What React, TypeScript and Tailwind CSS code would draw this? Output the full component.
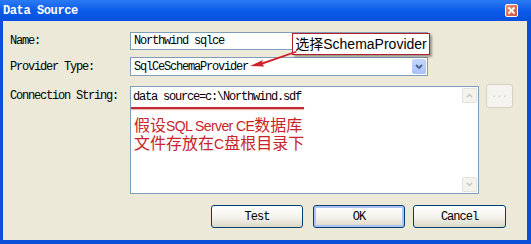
import React from "react";

const mono = { fontFamily: '"Liberation Mono", "DejaVu Sans Mono", monospace' };
const cjk = { fontFamily: '"Liberation Sans", "Noto Sans CJK SC", sans-serif' };

function XpButton({ label, focused }: { label: string; focused?: boolean }) {
  return (
    <div
      className={`flex h-[23px] items-center justify-center rounded-[3px] border border-[#003c74] bg-gradient-to-b from-[#ffffff] via-[#f4f3ee] to-[#dcd8c8] text-[12px] tracking-[-1px] text-black ${
        focused ? "shadow-[inset_0_0_0_2px_#a9c4f5]" : ""
      }`}
      style={mono}
    >
      {label}
    </div>
  );
}

export default function App() {
  return (
    <div className="relative flex h-[244px] w-[531px] flex-col overflow-hidden bg-[#0a4fd8]">
      {/* Title bar */}
      <div className="flex h-[21px] items-center justify-between bg-gradient-to-b from-[#2b7bf5] via-[#0a5be8] to-[#0650dc] pl-[3px] pr-[13px]">
        <span className="text-[12px] font-bold tracking-[-0.4px] text-white" style={mono}>
          Data Source
        </span>
        <div className="flex h-[13px] w-[13px] items-center justify-center rounded-[2px] border border-white bg-gradient-to-br from-[#e8907a] to-[#d0502e]">
          <svg width="9" height="9" viewBox="0 0 9 9">
            <path d="M1.5 1.5 L7.5 7.5 M7.5 1.5 L1.5 7.5" stroke="white" strokeWidth="1.8" />
          </svg>
        </div>
      </div>

      {/* Client area */}
      <div className="ml-[3px] mr-[4px] mb-[4px] flex flex-1 flex-col bg-[#ece9d8] pt-[11px] text-[12px] tracking-[-1.2px] text-black" style={mono}>
        <div className="flex h-[18px] items-center">
          <span className="w-[127px] pl-[7px]">Name:</span>
          <div className="flex h-[18px] w-[298px] items-center border border-[#7f9db9] bg-white pl-[3px]">
            Northwind sqlce
          </div>
        </div>

        <div className="mt-[7px] flex h-[19px] items-center">
          <span className="w-[127px] pl-[7px]">Provider Type:</span>
          <div className="flex h-[19px] w-[298px] items-center justify-between border border-[#7f9db9] bg-white pl-[3px] pr-[1px]">
            <span>SqlCeSchemaProvider</span>
            <div className="flex h-[15px] w-[14px] items-center justify-center rounded-[2px] bg-gradient-to-b from-[#c6d7fb] to-[#a7c0f6]">
              <svg width="8" height="6" viewBox="0 0 8 6">
                <path d="M1 1 L4 4 L7 1" stroke="#4d6185" strokeWidth="1.8" fill="none" />
              </svg>
            </div>
          </div>
        </div>

        <div className="mt-[8px] flex items-start">
          <span className="w-[127px] pl-[7px] pt-[3px]">Connection String:</span>
          <div className="mt-[2px] flex h-[108px] w-[349px] border border-[#7f9db9] bg-white">
            <div className="flex flex-1 flex-col">
              <div className="pl-[2px] pt-[3px] leading-[14px]">data source=c:\Northwind.sdf</div>
              <div className="mt-[3px] h-[2px] w-[173px] bg-[#c42a32] shadow-[0_1px_1px_#e8b0b0]" />
              <div className="mt-[8px] pl-[3px] text-[16px] leading-[18px] tracking-normal text-[#c8242c]" style={cjk}>
                <div>
                  假设<span className="text-[14px] tracking-[-0.6px]">SQL Server CE</span>数据库
                </div>
                <div>
                  文件存放在<span className="text-[14px]">C</span>盘根目录下
                </div>
              </div>
            </div>
            <div className="flex w-[16px] flex-col justify-between py-[1px] pr-[1px]">
              <div className="flex h-[15px] items-center justify-center rounded-[2px] border border-[#e4e2da] bg-[#f4f3ee]">
                <svg width="7" height="5" viewBox="0 0 7 5">
                  <path d="M1 4 L3.5 1.5 L6 4" stroke="#c9c7ba" strokeWidth="1.5" fill="none" />
                </svg>
              </div>
              <div className="flex h-[15px] items-center justify-center rounded-[2px] border border-[#e4e2da] bg-[#f4f3ee]">
                <svg width="7" height="5" viewBox="0 0 7 5">
                  <path d="M1 1 L3.5 3.5 L6 1" stroke="#c9c7ba" strokeWidth="1.5" fill="none" />
                </svg>
              </div>
            </div>
          </div>
          <div className="ml-[7px] flex h-[24px] w-[27px] items-center justify-center rounded-[3px] border border-[#d5d2c4] bg-[#f4f3ee] text-[9px] tracking-normal text-[#c9c7ba]">
            ...
          </div>
        </div>

        <div className="mt-[11px] flex gap-[10px] pl-[208px]">
          <div className="w-[92px]">
            <XpButton label="Test" />
          </div>
          <div className="w-[92px]">
            <XpButton label="OK" focused />
          </div>
          <div className="-ml-[2px] w-[93px]">
            <XpButton label="Cancel" />
          </div>
        </div>
      </div>

      {/* Callout annotation */}
      <div
        className="absolute left-[292px] top-[33px] flex h-[22px] w-[138px] items-center justify-center border border-[#b5202c] bg-white text-[14px] text-black shadow-[2px_2px_2px_rgba(0,0,0,0.35)]"
        style={cjk}
      >
        选择SchemaProvider
      </div>
      <svg className="pointer-events-none absolute left-0 top-0" width="531" height="244">
        <path d="M296 51 L262 62.5 L263 60 L250 66 L264.5 66.5 L262.5 64.5 L296.5 52.5 Z" fill="#d0202a" />
      </svg>
    </div>
  );
}
